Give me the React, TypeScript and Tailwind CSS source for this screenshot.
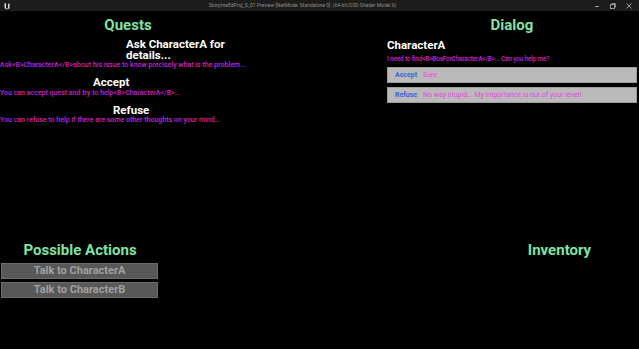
import React from "react";

const quests = [
    {
        title: "Ask CharacterA for details...",
        desc: "Ask<B>CharacterA</B>about his issue to know precisely what is the problem...",
        titleClass: "ml-[126px] w-[104px] mt-[5px] leading-[11px]",
        descClass: "mt-0",
    },
    {
        title: "Accept",
        desc: "You can accept quest and try to help<B>CharacterA</B>...",
        titleClass: "ml-[93px] mt-[7px] leading-[12px]",
        descClass: "mt-[1px]",
    },
    {
        title: "Refuse",
        desc: "You can refuse to help if there are some other thoughts on your mind...",
        titleClass: "ml-[113px] mt-[7px] leading-[12px]",
        descClass: "mt-0",
    },
];

const answers = [
    { label: "Accept", text: "Sure" },
    { label: "Refuse", text: "No way stupid... My importance is out of your level!" },
];

function TitleBar() {
    return (
        <div className="h-[11px] bg-[#1c1c1c] flex items-center px-[3px] text-[#8d8d8d]">
            {/* UE logo */}
            <svg width="8" height="8" viewBox="0 0 16 16" className="shrink-0">
                <path
                    d="M3 3 L6 2 L6 11 Q6 13 8 13 Q9.5 13 10 11.5 L10 4 L13 2.5 L13 13 L11 14 L10.5 13 Q9 14.5 7 14.3 Q3 14 3 10 Z"
                    fill="#d8d8d8"
                />
            </svg>
            <div className="flex-1 text-center text-[5px] leading-[11px] whitespace-nowrap">
                StorylineEdProj_S_01 Preview [NetMode: Standalone 0]&nbsp; (64-bit/D3D Shader Model 6)
            </div>
            <div className="flex items-center gap-[10px] pr-[4px]">
                <svg width="6" height="6" viewBox="0 0 6 6">
                    <path d="M1 3.5 H5" stroke="#9a9a9a" strokeWidth="1" />
                </svg>
                <svg width="6" height="6" viewBox="0 0 6 6">
                    <rect x="0.5" y="1.5" width="4" height="4" fill="none" stroke="#9a9a9a" strokeWidth="1" />
                    <path d="M1.5 0.5 H5.5 V4.5" fill="none" stroke="#9a9a9a" strokeWidth="0.8" />
                </svg>
                <svg width="6" height="6" viewBox="0 0 6 6">
                    <path d="M0.5 0.5 L5.5 5.5 M5.5 0.5 L0.5 5.5" stroke="#9a9a9a" strokeWidth="1" />
                </svg>
            </div>
        </div>
    );
}

export default function App() {
    return (
        <div className="w-[639px] h-[349px] bg-black flex flex-col overflow-hidden font-['Roboto',sans-serif]">
            <TitleBar />

            <div className="flex-1 flex flex-col">
                {/* Top row */}
                <div className="flex">
                    {/* Quests */}
                    <div className="w-[320px] flex flex-col">
                        <div className="w-[256px] mt-[5px] text-center text-[15px] leading-[18px] font-bold text-[#7fe3a3]">
                            Quests
                        </div>
                        {quests.map((q) => (
                            <React.Fragment key={q.title}>
                                <div className={`${q.titleClass} text-[11.5px] font-bold text-white`}>
                                    {q.title}
                                </div>
                                <div className={`${q.descClass} text-[7px] leading-[8px] font-medium text-[#cc22cc] whitespace-nowrap`}>
                                    {q.desc}
                                </div>
                            </React.Fragment>
                        ))}
                    </div>

                    {/* Dialog */}
                    <div className="flex-1">
                        <div className="ml-[67px] w-[250px] flex flex-col">
                            <div className="mt-[5px] text-center text-[15px] leading-[18px] font-bold text-[#7fe3a3]">
                                Dialog
                            </div>
                            <div className="mt-[5px] text-[11.5px] leading-[12px] font-bold text-white">CharacterA</div>
                            <div className="mt-[4px] text-[6.5px] leading-[8px] tracking-[-0.2px] font-medium text-[#cc22cc] whitespace-nowrap">
                                I need to find&lt;B&gt;BoxForCharacterA&lt;/B&gt;... Can you help me?
                            </div>
                            <div className="mt-[4px] flex flex-col gap-[4px]">
                                {answers.map((a) => (
                                    <div
                                        key={a.label}
                                        className="h-[16px] bg-[#bababa] border border-[#9c9c9c] flex items-center pl-[7px] text-[7px] whitespace-nowrap"
                                    >
                                        <span className="w-[28px] font-bold text-[#3f5fd8]">{a.label}</span>
                                        <span className="text-[#e04be0]">{a.text}</span>
                                    </div>
                                ))}
                            </div>
                        </div>
                    </div>
                </div>

                {/* Bottom row */}
                <div className="mt-auto mb-[51px] flex">
                    <div className="w-[320px] flex flex-col">
                        <div className="w-[160px] text-center text-[15px] leading-[18px] font-bold text-[#7fe3a3]">
                            Possible Actions
                        </div>
                        <div className="mt-[4px] ml-[1px] w-[157px] flex flex-col gap-[3px]">
                            {["Talk to CharacterA", "Talk to CharacterB"].map((t) => (
                                <div
                                    key={t}
                                    className="h-[16px] bg-[#585858] border border-[#6c6c6c] flex items-center justify-center text-[11px] font-bold text-[#a0a0a0]"
                                >
                                    {t}
                                </div>
                            ))}
                        </div>
                    </div>
                    <div className="flex-1 pl-[160px]">
                        <div className="text-center text-[15px] leading-[18px] font-bold text-[#7fe3a3]">Inventory</div>
                    </div>
                </div>
            </div>
        </div>
    );
}
